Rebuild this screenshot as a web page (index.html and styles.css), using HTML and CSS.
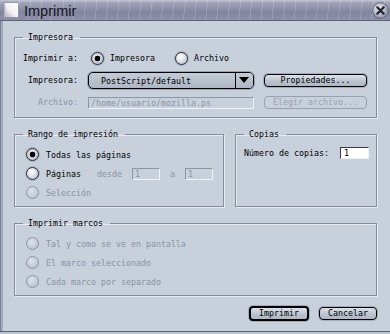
FILE: index.html
```html
<!DOCTYPE html>
<html lang="es">

<head>
  <meta charset="UTF-8">
  <meta name="viewport" content="width=device-width, initial-scale=1">
  <title>Imprimir</title>
  <link rel="stylesheet" href="styles.css">
</head>

<body>

  <div class="window">
    <div class="titlebar">
      <svg class="app-icon" width="18" height="18" viewBox="0 0 18 18">
        <defs>
          <linearGradient id="page" x1="1" y1="0" x2="0" y2="1">
            <stop offset="0" stop-color="#ffffff"/>
            <stop offset=".55" stop-color="#f2f2f4"/>
            <stop offset="1" stop-color="#a9abb6"/>
          </linearGradient>
        </defs>
        <path d="M2 1.5h13.5l1 1v14h-14.5z" fill="url(#page)" stroke="#8a8c9a" stroke-width=".8"/>
        <path d="M2.4 2c1.2 2 1.2 12 0 14.5" fill="none" stroke="#c4c6d0" stroke-width="1"/>
      </svg>
      <span class="title">Imprimir</span>
      <svg class="close" width="17" height="17" viewBox="0 0 17 17">
        <defs>
          <radialGradient id="knob" cx=".4" cy=".35" r=".7">
            <stop offset="0" stop-color="#e6e7ee"/>
            <stop offset="1" stop-color="#8f92a6"/>
          </radialGradient>
        </defs>
        <circle cx="8.5" cy="8.5" r="7.8" fill="url(#knob)" stroke="#5b5e70" stroke-width=".9"/>
        <path d="M5.3 5.3l6.4 6.4M11.7 5.3l-6.4 6.4" stroke="#20222c" stroke-width="2.2" stroke-linecap="round"/>
      </svg>
    </div>

    <div class="content">
      <fieldset class="group">
        <legend>Impresora</legend>
        <div class="printer-grid">
          <span class="lbl">Imprimir a:</span>
          <div class="choices">
            <label class="opt first"><input type="radio" name="dest" checked><span>Impresora</span></label>
            <label class="opt"><input type="radio" name="dest"><span>Archivo</span></label>
          </div>
          <span></span>

          <span class="lbl">Impresora:</span>
          <div class="select">
            <span class="select-text">PostScript/default</span>
            <span class="select-arrow"></span>
          </div>
          <button class="btn" type="button">Propiedades...</button>

          <span class="lbl off">Archivo:</span>
          <input class="field wide" type="text" value="/home/usuario/mozilla.ps" disabled>
          <button class="btn" type="button" disabled>Elegir archivo...</button>
        </div>
      </fieldset>

      <div class="split">
        <fieldset class="group range">
          <legend>Rango de impresión</legend>
          <div class="list">
            <label class="opt"><input type="radio" name="range" checked><span>Todas las páginas</span></label>
            <div class="pages">
              <label class="opt"><input type="radio" name="range"><span>Páginas</span></label>
              <span class="off from">desde</span>
              <input class="field small" type="text" value="1" disabled>
              <span class="off">a</span>
              <input class="field small" type="text" value="1" disabled>
            </div>
            <label class="opt off"><input type="radio" name="range" disabled><span>Selección</span></label>
          </div>
        </fieldset>

        <fieldset class="group copies">
          <legend>Copias</legend>
          <div class="copies-row">
            <span>Número de copias:</span>
            <input class="field count" type="text" value="1">
          </div>
        </fieldset>
      </div>

      <fieldset class="group">
        <legend>Imprimir marcos</legend>
        <div class="list">
          <label class="opt off"><input type="radio" name="frames" disabled><span>Tal y como se ve en pantalla</span></label>
          <label class="opt off"><input type="radio" name="frames" disabled><span>El marco seleccionado</span></label>
          <label class="opt off"><input type="radio" name="frames" disabled><span>Cada marco por separado</span></label>
        </div>
      </fieldset>

      <div class="actions">
        <button class="btn default" type="button">Imprimir</button>
        <button class="btn" type="button">Cancelar</button>
      </div>
    </div>
  </div>

</body>

</html>
```

FILE: styles.css
```css
html,
body {
  margin: 0;
  padding: 0;
}

body {
  background: #c8d0dc;
  color: #000;
  font-family: "DejaVu Sans Mono", "Liberation Mono", monospace;
  font-size: 8.3px;
}

.window {
  background: #c8d0dc;
  box-shadow: inset 0 -2px 0 #bcc4d0, inset 0 -3px 0 #5a6170, inset 1px 0 0 #7c8494, inset 3px 0 0 #a2aaba;
  box-sizing: border-box;
  display: flex;
  flex-direction: column;
  height: 334px;
  width: 390px;
}

/* title bar */

.titlebar {
  align-items: center;
  background:
    repeating-linear-gradient(96deg, transparent 0 8px, rgba(255, 255, 255, .16) 8px 9px, transparent 9px 11px),
    linear-gradient(#c3c6d4 0, #9ea1b6 3px, #83869f 12px, #8a8da6 19px);
  border-bottom: 1px solid #5d6177;
  display: flex;
  height: 20px;
  padding: 0 1px 0 2px;
}

.app-icon {
  flex: none;
}

.title {
  color: #14151e;
  flex: 1;
  font-family: "Liberation Sans", Arial, sans-serif;
  font-size: 14.5px;
  margin-left: 4px;
  margin-top: 2px;
}

.close {
  flex: none;
  margin-top: 1px;
}

/* body */

.content {
  display: flex;
  flex-direction: column;
  padding: 0 13px 0 14px;
}

.group {
  border: 1px solid #848c9c;
  box-shadow: inset 1px 1px 0 #e8ecf2, 1px 1px 0 #e8ecf2;
  margin: 11px 0 0;
  min-width: 0;
  padding: 0;
}

.group legend {
  line-height: 11px;
  margin-left: 8px;
  padding: 0 7px 0 5px;
}

.off {
  color: #8a93a3;
}

/* radios */

.opt {
  align-items: center;
  display: flex;
  gap: 7px;
  white-space: nowrap;
}

.opt input {
  -webkit-appearance: none;
  appearance: none;
  background: radial-gradient(circle at 40% 35%, #ffffff 0, #e6eaf0 35%, #a9b1bf 100%);
  border: 1px solid #2a2c34;
  border-radius: 50%;
  box-shadow: 0 0 0 1px rgba(120, 128, 144, .35);
  flex: none;
  height: 13px;
  margin: 0;
  width: 13px;
}

.opt input:checked {
  background:
    radial-gradient(circle, #000 0 2.6px, transparent 3.1px),
    radial-gradient(circle at 40% 35%, #e0e4ea 0, #b4bcc8 100%);
}

.opt input:disabled {
  background: radial-gradient(circle at 40% 35%, #dde2e9 0, #c4ccd8 60%, #aab2c0 100%);
  border-color: #8d95a5;
  box-shadow: none;
}

/* printer group */

.printer-grid {
  align-items: center;
  display: grid;
  grid-auto-rows: 22px;
  grid-template-columns: 63px 166px 103px;
  column-gap: 10px;
  padding: 4px 0 4px;
}

.lbl {
  text-align: right;
}

.choices {
  display: flex;
  padding-left: 3px;
}

.choices .opt {
  gap: 6px;
}

.choices .first {
  margin-right: 20px;
}

.select {
  align-items: stretch;
  background: linear-gradient(#c4ccd8, #aeb6c3);
  border: 1px solid #000;
  border-radius: 5px;
  box-shadow: 0 0 0 1px #9aa2b0;
  display: flex;
  height: 15px;
  margin-top: 1px;
}

.select-text {
  align-items: center;
  display: flex;
  flex: 1;
  padding-left: 12px;
}

.select-arrow {
  background: linear-gradient(#c4ccd8, #aeb6c3);
  border-left: 1px solid #000;
  border-radius: 0 4px 4px 0;
  position: relative;
  width: 17px;
}

.select-arrow::after {
  border-left: 5px solid transparent;
  border-right: 5px solid transparent;
  border-top: 6px solid #000;
  content: "";
  left: 3px;
  position: absolute;
  top: 4px;
}

.btn {
  background: linear-gradient(#dde2ea, #bcc4d0 55%, #aeb6c3);
  border: 1px solid #000;
  border-radius: 4px;
  box-shadow: 0 0 0 1px rgba(110, 118, 134, .4);
  color: #000;
  font-family: inherit;
  font-size: inherit;
  height: 13px;
  line-height: 11px;
  padding: 0;
}

.btn:disabled {
  background: #c8d0dc;
  border-color: #99a1b0;
  box-shadow: none;
  color: #99a1b0;
}

.field {
  background: #c8d0dc;
  border: 1px solid #8d95a4;
  border-bottom-color: #eef1f5;
  border-right-color: #eef1f5;
  box-sizing: border-box;
  color: #8a93a3;
  font-family: inherit;
  font-size: inherit;
  height: 12px;
  margin: 0;
  padding: 0 2px;
}

.field.wide {
  margin-top: 1px;
  width: 166px;
}

/* range and copies */

.split {
  display: flex;
  gap: 11px;
}

.range {
  flex: none;
  width: 208px;
}

.copies {
  flex: 1;
}

.list {
  display: flex;
  flex-direction: column;
  padding: 5px 0 4px 11px;
}

.list > * {
  height: 19px;
}

.pages {
  align-items: center;
  display: flex;
  gap: 10px;
}

.pages .from {
  margin-left: 6px;
}

.field.small {
  margin-top: 1px;
  width: 28px;
}

.copies-row {
  align-items: center;
  display: flex;
  gap: 11px;
  padding: 7px 0 0 8px;
}

.field.count {
  background: #fff;
  border-color: #3a3c44;
  border-bottom-color: #eef1f5;
  border-right-color: #eef1f5;
  color: #000;
  height: 12px;
  padding: 0 3px;
  width: 29px;
}

/* footer */

.actions {
  align-items: center;
  display: flex;
  gap: 10px;
  justify-content: flex-end;
  margin-top: 10px;
}

.actions .btn {
  height: 13px;
}

.btn.default {
  border-width: 2px;
  height: 15px;
  width: 60px;
}

.actions .btn:last-child {
  width: 58px;
}
```
